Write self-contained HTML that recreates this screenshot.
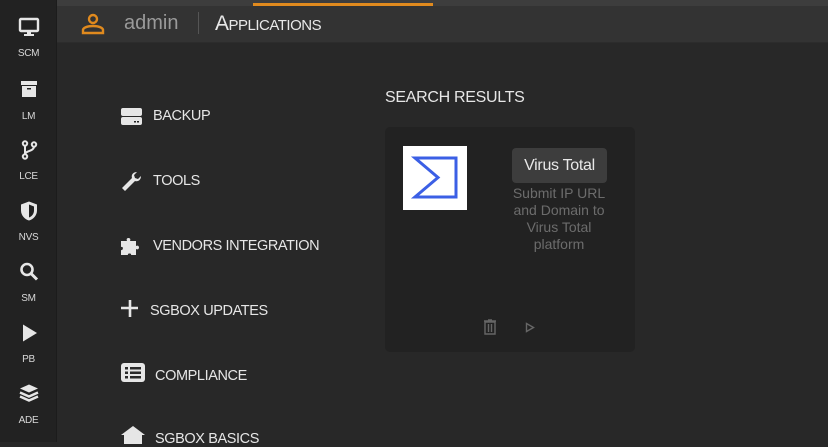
<!DOCTYPE html>
<html><head><meta charset="utf-8"><style>
*{margin:0;padding:0;box-sizing:border-box}
body{width:828px;height:442px;overflow:hidden;background:#282828;font-family:"Liberation Sans",sans-serif;position:relative}
.side{position:absolute;left:0;top:0;width:57px;height:442px;background:#222;border-right:1px solid #1c1c1c}
.si{position:absolute;left:0;width:57px;text-align:center;color:#d8d8d8;font-size:10px;letter-spacing:-0.3px}
.si svg{display:block;margin:0 auto 10px}
.top{position:absolute;left:57px;top:0;right:0;height:6px;background:#3d3d3d}
.orange{position:absolute;left:253px;top:3px;width:180px;height:3px;background:#e08a1e}
.hdr{position:absolute;left:57px;top:6px;right:0;height:37px;background:#333;border-bottom:1px solid #2c2c2c}
.admin{position:absolute;left:124px;top:12px;font-size:20px;color:#9a9a9a}
.sep{position:absolute;left:198px;top:12px;width:1px;height:22px;background:#555}
.app{position:absolute;left:215px;top:12px;color:#e8e8e8;font-size:21px;font-variant:small-caps;letter-spacing:-0.5px}
.mi{position:absolute;left:120px;color:#e6e6e6;font-size:14.5px;letter-spacing:-0.4px}
.mi svg{position:absolute;left:0}
.card{position:absolute;left:385px;top:127px;width:250px;height:225px;background:#222;border-radius:5px}
</style></head><body>
<div class="side">
<div class="si" style="top:16px"><svg width="22" height="22" viewBox="0 0 22 20"><rect x="2" y="2" width="18" height="12" rx="1" fill="none" stroke="#e6e6e6" stroke-width="2.4"/><rect x="9" y="14" width="4" height="3" fill="#e6e6e6"/><rect x="6" y="17" width="10" height="2" fill="#e6e6e6"/></svg>SCM</div>
<div class="si" style="top:79px"><svg width="20" height="22" viewBox="0 0 20 20"><rect x="2" y="1" width="16" height="4" fill="#e6e6e6"/><rect x="3" y="6" width="14" height="11" fill="#e6e6e6"/><rect x="8" y="8" width="4" height="1.5" fill="#222"/></svg>LM</div>
<div class="si" style="top:139px"><svg width="20" height="22" viewBox="0 0 20 21"><circle cx="6" cy="4" r="2.2" fill="none" stroke="#e6e6e6" stroke-width="2"/><circle cx="6" cy="17" r="2.2" fill="none" stroke="#e6e6e6" stroke-width="2"/><circle cx="15" cy="5" r="2.2" fill="none" stroke="#e6e6e6" stroke-width="2"/><path d="M6 6v9M15 7c0 5-9 4-9 8" stroke="#e6e6e6" stroke-width="2" fill="none"/></svg>LCE</div>
<div class="si" style="top:200px"><svg width="20" height="22" viewBox="0 0 20 21"><path d="M10 1l8 3v6c0 5-4 9-8 10-4-1-8-5-8-10V4z" fill="#e6e6e6"/><path d="M10 4l5 2v4c0 3-2 6-5 7z" fill="#222"/></svg>NVS</div>
<div class="si" style="top:261px"><svg width="20" height="22" viewBox="0 0 20 21"><circle cx="8" cy="8" r="5.5" fill="none" stroke="#e6e6e6" stroke-width="2.6"/><path d="M12 12l6 6" stroke="#e6e6e6" stroke-width="3"/></svg>SM</div>
<div class="si" style="top:322px"><svg width="20" height="22" viewBox="0 0 20 21"><path d="M4 2l14 8.5L4 19z" fill="#e6e6e6"/></svg>PB</div>
<div class="si" style="top:383px"><svg width="20" height="22" viewBox="0 0 20 21"><path d="M10 1l9 4-9 4-9-4z" fill="#e6e6e6"/><path d="M1 9l9 4 9-4M1 13l9 4 9-4" stroke="#e6e6e6" stroke-width="2.4" fill="none"/></svg>ADE</div>
</div>
<div class="top"></div><div class="orange"></div>
<div class="hdr">
<svg style="position:absolute;left:24px;top:7px" width="24" height="22" viewBox="0 0 24 22"><circle cx="12" cy="6" r="4" fill="none" stroke="#e08a1e" stroke-width="2.4"/><path d="M2 20v-3c0-2 4-4 10-4s10 2 10 4v3z" fill="none" stroke="#e08a1e" stroke-width="2.4"/></svg>
</div>
<div class="admin">admin</div>
<div class="sep"></div>
<div class="app">Applications</div>

<div class="mi" style="top:107px"><svg width="22" height="18" viewBox="0 0 22 18"><rect x="1" y="1" width="21" height="8" rx="2" fill="#e6e6e6"/><rect x="1" y="10" width="21" height="8" rx="2" fill="#e6e6e6"/><rect x="14" y="14" width="2" height="1.5" fill="#222"/><rect x="17" y="14" width="2" height="1.5" fill="#222"/></svg><span style="position:absolute;left:33px;top:1px">BACKUP</span></div>
<div class="mi" style="top:170px"><svg width="24" height="22" viewBox="0 0 24 22"><path d="M2 18l10-10c-1-3 1-6 5-6l-3 3 1 3 3 1 3-3c0 4-3 6-6 5L5 21z" fill="#e6e6e6"/></svg><span style="position:absolute;left:33px;top:3px;white-space:nowrap">TOOLS</span></div>
<div class="mi" style="top:235px"><svg width="24" height="22" viewBox="0 0 24 22"><path d="M1 6h6c-2-4 5-4 3 0h6v5c4-2 4 5 0 3v6h-5c1-2-4-2-3 0H1v-5c2 1 3-4 0-3z" fill="#e6e6e6"/></svg><span style="position:absolute;left:33px;top:3px;white-space:nowrap">VENDORS INTEGRATION</span></div>
<div class="mi" style="top:299px"><svg width="20" height="20" viewBox="0 0 20 20"><path d="M10 1v17M1 9h17" stroke="#e6e6e6" stroke-width="2.6"/></svg><span style="position:absolute;left:30px;top:4px;white-space:nowrap">SGBOX UPDATES</span></div>
<div class="mi" style="top:363px"><svg width="26" height="20" viewBox="0 0 26 20"><rect x="1" y="0" width="24" height="19" rx="3" fill="#e6e6e6"/><g fill="#2a2a2a"><rect x="5" y="4" width="3" height="2.5"/><rect x="10" y="4" width="11" height="2.5"/><rect x="5" y="8.5" width="3" height="2.5"/><rect x="10" y="8.5" width="11" height="2.5"/><rect x="5" y="13" width="3" height="2.5"/><rect x="10" y="13" width="11" height="2.5"/></g></svg><span style="position:absolute;left:35px;top:5px;white-space:nowrap">COMPLIANCE</span></div>
<div class="mi" style="top:425px"><svg width="26" height="20" viewBox="0 0 26 20"><path d="M13 1l12 9H1z" fill="#e6e6e6"/><rect x="4" y="9" width="18" height="10" fill="#e6e6e6"/></svg><span style="position:absolute;left:35px;top:6px;white-space:nowrap">SGBOX BASICS</span></div>

<div style="position:absolute;left:385px;top:89px;color:#e6e6e6;font-size:16px;letter-spacing:-0.3px">SEARCH RESULTS</div>
<div class="card">
<div style="position:absolute;left:18px;top:19px;width:64px;height:64px;background:#fff"><svg width="64" height="64" viewBox="0 0 64 64"><path d="M12 12H53V51H12L35 31.5Z" fill="none" stroke="#3b5fe5" stroke-width="3" stroke-linejoin="miter" stroke-miterlimit="10"/></svg></div>
<div style="position:absolute;left:127px;top:21px;width:95px;height:35px;background:#3d3d3d;border-radius:4px;color:#e8e8e8;font-size:16px;text-align:center;line-height:35px;letter-spacing:-0.3px">Virus Total</div>
<div style="position:absolute;left:120px;top:58px;width:108px;text-align:center;color:#6c6c6c;font-size:14px;line-height:17px">Submit IP URL and Domain to Virus Total platform</div>
<svg style="position:absolute;left:98px;top:192px" width="14" height="16" viewBox="0 0 14 16"><path d="M2 3h10v12H2zM1 2h12M5 1h4M5.5 5v8M8.5 5v8" fill="none" stroke="#666" stroke-width="1.4"/></svg>
<svg style="position:absolute;left:140px;top:195px" width="10" height="11" viewBox="0 0 10 11"><path d="M1.5 1.5l7 4-7 4z" fill="none" stroke="#666" stroke-width="1.4"/></svg>
</div>
</body></html>
